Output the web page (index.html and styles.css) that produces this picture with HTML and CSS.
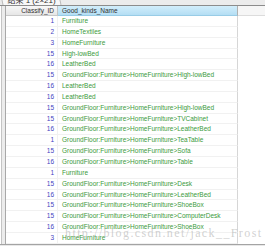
FILE: index.html
```html
<!DOCTYPE html>
<html>
<head>
<meta charset="utf-8">
<link rel="stylesheet" href="styles.css">
</head>
<body>
<div class="page">
  <div class="tabs"><div class="tab"><span class="tab-text">结果 1 (2×21)</span></div></div>
  <div class="main">
    <div class="gutter"></div>
    <div class="grid">
      <div class="row head">
        <div class="c id">Classify_ID</div>
        <div class="c name">Good_kinds_Name</div>
        <div class="c fill"></div>
      </div>
      <div class="row"><div class="c id">1</div><div class="c name">Furniture</div><div class="c fill"></div></div>
      <div class="row"><div class="c id">2</div><div class="c name">HomeTextiles</div><div class="c fill"></div></div>
      <div class="row"><div class="c id">3</div><div class="c name">HomeFurniture</div><div class="c fill"></div></div>
      <div class="row"><div class="c id">15</div><div class="c name">High-lowBed</div><div class="c fill"></div></div>
      <div class="row"><div class="c id">16</div><div class="c name">LeatherBed</div><div class="c fill"></div></div>
      <div class="row"><div class="c id">15</div><div class="c name">GroundFloor:Furniture&gt;HomeFurniture&gt;High-lowBed</div><div class="c fill"></div></div>
      <div class="row"><div class="c id">16</div><div class="c name">LeatherBed</div><div class="c fill"></div></div>
      <div class="row"><div class="c id">16</div><div class="c name">LeatherBed</div><div class="c fill"></div></div>
      <div class="row"><div class="c id">15</div><div class="c name">GroundFloor:Furniture&gt;HomeFurniture&gt;High-lowBed</div><div class="c fill"></div></div>
      <div class="row"><div class="c id">15</div><div class="c name">GroundFloor:Furniture&gt;HomeFurniture&gt;TVCabinet</div><div class="c fill"></div></div>
      <div class="row"><div class="c id">16</div><div class="c name">GroundFloor:Furniture&gt;HomeFurniture&gt;LeatherBed</div><div class="c fill"></div></div>
      <div class="row"><div class="c id">1</div><div class="c name">GroundFloor:Furniture&gt;HomeFurniture&gt;TeaTable</div><div class="c fill"></div></div>
      <div class="row"><div class="c id">15</div><div class="c name">GroundFloor:Furniture&gt;HomeFurniture&gt;Sofa</div><div class="c fill"></div></div>
      <div class="row"><div class="c id">16</div><div class="c name">GroundFloor:Furniture&gt;HomeFurniture&gt;Table</div><div class="c fill"></div></div>
      <div class="row"><div class="c id">1</div><div class="c name">Furniture</div><div class="c fill"></div></div>
      <div class="row"><div class="c id">15</div><div class="c name">GroundFloor:Furniture&gt;HomeFurniture&gt;Desk</div><div class="c fill"></div></div>
      <div class="row"><div class="c id">16</div><div class="c name">GroundFloor:Furniture&gt;HomeFurniture&gt;LeatherBed</div><div class="c fill"></div></div>
      <div class="row"><div class="c id">15</div><div class="c name">GroundFloor:Furniture&gt;HomeFurniture&gt;ShoeBox</div><div class="c fill"></div></div>
      <div class="row"><div class="c id">15</div><div class="c name">GroundFloor:Furniture&gt;HomeFurniture&gt;ComputerDesk</div><div class="c fill"></div></div>
      <div class="row"><div class="c id">16</div><div class="c name">GroundFloor:Furniture&gt;HomeFurniture&gt;ShoeBox</div><div class="c fill"></div></div>
      <div class="row"><div class="c id">3</div><div class="c name">HomeFurniture</div><div class="c fill"></div></div>
    </div>
  </div>
  <div class="bottom"></div>
  <div class="watermark">http://blog.csdn.net/jack__Frost</div>
</div>
</body>
</html>
```
FILE: styles.css
```css
html, body {
  margin: 0;
  padding: 0;
  background: #ffffff;
}
.page {
  position: relative;
  width: 265px;
  height: 246px;
  overflow: hidden;
  font-family: "Liberation Sans", Arial, sans-serif;
  font-size: 6.5px;
  background: #ffffff;
}
.tabs {
  height: 5px;
  background: #ececec;
  border-bottom: 1px solid #8c8c8c;
  overflow: hidden;
  display: flex;
  padding-left: 2px;
}
.tab {
  height: 5px;
  background: #f8f8f8;
  border-left: 1px solid #b8b8b8;
  border-right: 1px solid #b8b8b8;
  transform: skewX(12deg);
  padding: 0 5px 0 4px;
  overflow: hidden;
}
.tab-text {
  display: block;
  transform: skewX(-12deg) translateY(-4px);
  font-family: "Liberation Sans", "Noto Sans CJK SC", sans-serif;
  font-size: 8px;
  line-height: 9px;
  color: #333;
  white-space: nowrap;
}
.main {
  display: flex;
}
.gutter {
  width: 3px;
  margin-left: 1px;
  border-left: 1px solid #c4c4c4;
  border-right: 1px solid #a8a8a8;
  background: #ececec;
  flex: none;
}
.grid {
  flex: 1;
  display: flex;
  flex-direction: column;
}
.row {
  display: grid;
  grid-template-columns: 52px 180px 1fr;
  height: 10.85px;
}
.c {
  box-sizing: border-box;
  white-space: nowrap;
  overflow: hidden;
  line-height: 10px;
  border-bottom: 1px solid #f1f1f1;
}
.c.id {
  text-align: right;
  padding-right: 3px;
  color: #3f3fbf;
  border-right: 1px solid #f1f1f1;
}
.c.name {
  padding-left: 4px;
  color: #3b9a3b;
  border-right: 1px solid #d6d6d6;
}
.c.fill {
  border-bottom: none;
}
.row.head {
  height: 10px;
}
.head .c {
  line-height: 9px;
  color: #303030;
  border-bottom: 1px solid #c8c8c8;
}
.head .c.id {
  background: linear-gradient(#f8f8f8, #e6e6e6);
  border-right: 1px solid #c4c4c4;
}
.head .c.name {
  background: linear-gradient(#d2eefb, #b4def4);
  border-right: 1px solid #b0b0b0;
  border-bottom: 1px solid #98cce6;
}
.head .c.fill {
  background: #f6f6f6;
  border-bottom: 1px solid #dcdcdc;
}
.bottom {
  height: 3px;
  border-top: 1px solid #a4a4a4;
  background: #e8e8e8;
}
.watermark {
  position: absolute;
  left: 65px;
  top: 226px;
  font-family: "Liberation Serif", "Times New Roman", serif;
  font-size: 12px;
  letter-spacing: 1.4px;
  color: rgba(170, 170, 170, 0.55);
  white-space: nowrap;
}
```
